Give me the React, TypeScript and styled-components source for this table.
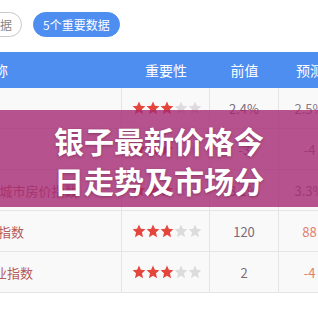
import React from 'react';
import styled, { createGlobalStyle } from 'styled-components';

const GlobalStyle = createGlobalStyle`
  html, body {
    margin: 0;
    padding: 0;
    background: #ffffff;
    font-family: 'Noto Sans CJK SC', 'Noto Sans', sans-serif;
  }
`;

const Page = styled.div`
  position: relative;
  width: 318px;
  height: 318px;
  overflow: hidden;
  background: #ffffff;
`;

/* the table is wider than the window, we only see its middle part */
const Sheet = styled.div`
  width: 475px;
  margin-left: -134px;
`;

const FilterBar = styled.div`
  display: flex;
  align-items: center;
  gap: 11px;
  padding: 12px 0 15px 88px;
`;

const Pill = styled.span<{ $active?: boolean }>`
  display: inline-flex;
  align-items: center;
  height: 25px;
  box-sizing: border-box;
  padding: 0 9px;
  border-radius: 999px;
  border: 1px solid ${p => (p.$active ? '#4d8ef0' : '#c8c8c8')};
  background: ${p => (p.$active ? '#4d8ef0' : '#ffffff')};
  color: ${p => (p.$active ? '#ffffff' : '#888888')};
  font-size: 12px;
  white-space: nowrap;
`;

const HeadRow = styled.div`
  display: grid;
  grid-template-columns: 256px 88px 69px 62px;
  height: 36px;
  background: #4d8ef0;
`;

const HeadCell = styled.div`
  display: flex;
  align-items: center;
  justify-content: center;
  color: #ffffff;
  font-size: 14px;
`;

const Row = styled.div`
  display: grid;
  grid-template-columns: 256px 88px 69px 62px;
  height: 41px;
  box-sizing: border-box;
  border-bottom: 1px solid #e6e4e6;
  background: #faf9fa;
`;

const Cell = styled.div<{ $color?: string }>`
  display: flex;
  align-items: center;
  justify-content: center;
  border-right: 1px solid #e6e4e6;
  font-size: 13px;
  color: ${p => p.$color || '#7a6a78'};
  white-space: nowrap;
`;

const NameCell = styled(Cell)`
  justify-content: flex-start;
  padding-left: 54px;
  color: #b45a58;
`;

const Stars = styled.div`
  display: flex;
  gap: 0;
  padding-left: 3px;
`;

const Banner = styled.div`
  position: absolute;
  left: 0;
  right: 0;
  top: 110px;
  height: 97px;
  background: rgba(165, 40, 114, 0.8);
  display: flex;
  justify-content: center;
  align-items: flex-start;
  padding-top: 10px;
  box-sizing: border-box;
`;

const BannerTitle = styled.h1`
  margin: 0;
  max-width: 225px;
  max-height: 80px;
  overflow: hidden;
  font-size: 30px;
  line-height: 40px;
  font-weight: 700;
  color: #ffffff;
  text-align: center;
  text-shadow: 0 1px 3px rgba(60, 0, 30, 0.35);
`;

const Star = ({ on }: { on: boolean }) => (
  <svg width="14" height="14" viewBox="0 0 24 24">
    <polygon
      points="12,1 15.2,8.3 23,9 17.1,14.3 18.9,22.5 12,18.3 5.1,22.5 6.9,14.3 1,9 8.8,8.3"
      fill={on ? '#e4463b' : '#dedbde'}
    />
  </svg>
);

const rows = [
  { name: '美国CPI年率', level: 3, prev: '2.4%', fore: '2.5%', foreColor: '#8a7a86' },
  { name: '美国PPI月率', level: 3, prev: '-3', fore: '-4', foreColor: '#8a7a86' },
  { name: '中国70个大中城市房价指数', level: 3, prev: '3.1%', fore: '3.3%', foreColor: '#8a7a86' },
  { name: '日本领先指标指数', level: 3, prev: '120', fore: '88', foreColor: '#e0806c' },
  { name: '美国ISM制造业指数', level: 3, prev: '2', fore: '-4', foreColor: '#e0806c' },
];

export default function App() {
  return (
    <Page>
      <GlobalStyle />
      <Sheet>
        <FilterBar>
          <Pill>全部数据</Pill>
          <Pill $active>5个重要数据</Pill>
        </FilterBar>
        <HeadRow>
          <HeadCell>名称</HeadCell>
          <HeadCell>重要性</HeadCell>
          <HeadCell>前值</HeadCell>
          <HeadCell>预测</HeadCell>
        </HeadRow>
        {rows.map(r => (
          <Row key={r.name}>
            <NameCell>{r.name}</NameCell>
            <Cell>
              <Stars>
                {[0, 1, 2, 3, 4].map(i => (
                  <Star key={i} on={i < r.level} />
                ))}
              </Stars>
            </Cell>
            <Cell>{r.prev}</Cell>
            <Cell $color={r.foreColor}>{r.fore}</Cell>
          </Row>
        ))}
      </Sheet>
      <Banner>
        <BannerTitle>银子最新价格今日走势及市场分析</BannerTitle>
      </Banner>
    </Page>
  );
}
